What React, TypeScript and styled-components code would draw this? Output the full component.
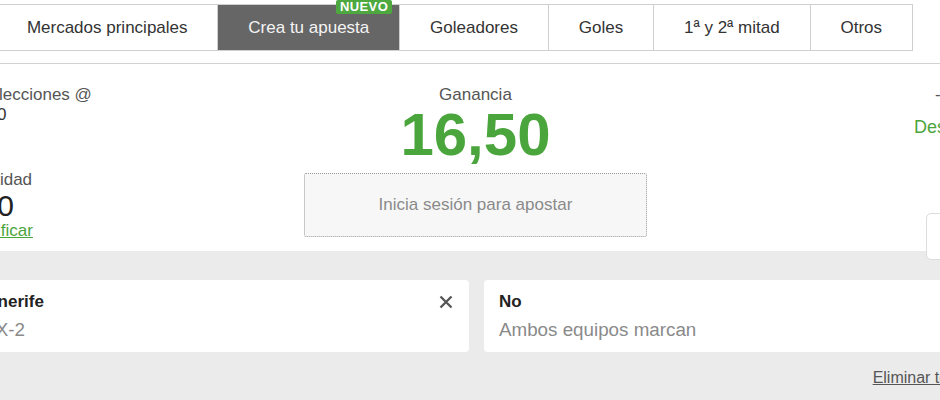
import React from "react";
import styled, { createGlobalStyle } from "styled-components";

const GlobalStyle = createGlobalStyle`
  html, body { margin: 0; padding: 0; background: #fff; }
  body { font-family: "Liberation Sans", Arial, Helvetica, sans-serif; overflow: hidden; }
  * { box-sizing: border-box; }
`;

const Page = styled.div`
  width: 940px;
  height: 400px;
  overflow: hidden;
  display: flex;
  flex-direction: column;
  background: #fff;
`;

const TabBar = styled.nav`
  display: flex;
  flex-shrink: 0;
  margin: 4px 0 12px -4px;
`;

const Tab = styled.div<{ $active?: boolean }>`
  position: relative;
  height: 47px;
  padding: 0 29.9px;
  display: flex;
  align-items: center;
  font-size: 17px;
  white-space: nowrap;
  border: 1px solid #cfcfcf;
  border-left-width: 0;
  &:first-child { border-left-width: 1px; }
  background: ${(p) => (p.$active ? "#666666" : "#ffffff")};
  color: ${(p) => (p.$active ? "#f4f4f4" : "#333333")};
`;

const Badge = styled.span`
  position: absolute;
  top: -5px;
  right: 7px;
  background: #4ca83f;
  color: #fff;
  font-weight: bold;
  font-size: 13px;
  line-height: 14px;
  letter-spacing: 0.4px;
  padding: 0 4px;
  border-radius: 2px;
`;

const Wrapper = styled.div`
  flex: 1;
  width: 1025px;
  margin-left: -36px;
  display: flex;
  flex-direction: column;
`;

const Panel = styled.section`
  background: #fff;
  border-top: 1px solid #d2d2d2;
  display: grid;
  grid-template-columns: 1fr 343px 1fr;
  padding: 21px 0 10px;
`;

const LeftCol = styled.div`
  display: flex;
  flex-direction: column;
  align-items: flex-start;
`;

const Label = styled.div<{ $gap?: number }>`
  font-size: 17px;
  line-height: 20px;
  color: #555;
  white-space: nowrap;
  margin-top: ${(p) => p.$gap ?? 0}px;
`;

const Odds = styled.div`
  font-size: 17px;
  line-height: 20px;
  color: #333;
`;

const Amount = styled.div`
  font-size: 30px;
  line-height: 31px;
  color: #222;
`;

const GreenLink = styled.a`
  font-size: 17px;
  line-height: 20px;
  color: #4ba53d;
  text-decoration: underline;
  cursor: pointer;
  white-space: nowrap;
`;

const CenterCol = styled.div`
  display: flex;
  flex-direction: column;
  align-items: center;
`;

const Big = styled.div`
  font-size: 60px;
  line-height: 60px;
  font-weight: bold;
  color: #4ba53d;
`;

const LoginButton = styled.button`
  margin-top: 8px;
  width: 343px;
  height: 64px;
  background: #f7f7f7;
  border: 1px dotted #9a9a9a;
  border-radius: 2px;
  font-family: inherit;
  font-size: 17px;
  color: #8a8a8a;
  cursor: pointer;
`;

const RightCol = styled.div`
  position: relative;
  display: flex;
  flex-direction: column;
  align-items: flex-start;
`;

const Dash = styled.div`
  font-size: 17px;
  line-height: 20px;
  color: #555;
  margin-left: 288px;
`;

const RightLink = styled(GreenLink)`
  margin: 12px 0 0 267px;
  text-decoration: none;
  font-size: 18px;
`;

const SideBox = styled.div`
  position: absolute;
  top: 128px;
  left: 279px;
  width: 90px;
  height: 47px;
  background: #fff;
  border: 1px solid #dcdcdc;
  border-radius: 5px;
`;

const Lower = styled.section`
  flex: 1;
  background: #ebebeb;
  padding-top: 29px;
`;

const Cards = styled.div`
  display: grid;
  grid-template-columns: 1fr 1fr;
  gap: 15px;
`;

const Card = styled.div`
  height: 72px;
  background: #fff;
  border-radius: 4px;
  padding: 12px 15px 0 15px;
`;

const CardHead = styled.div`
  display: flex;
  justify-content: space-between;
  align-items: center;
`;

const CardTitle = styled.div`
  font-size: 17px;
  line-height: 20px;
  font-weight: bold;
  color: #222;
`;

const CardSub = styled.div`
  font-size: 18.8px;
  line-height: 26px;
  margin-top: 4.5px;
  color: #8a8a8a;
  white-space: nowrap;
`;

const CloseBtn = styled.button`
  width: 16px;
  height: 16px;
  padding: 0;
  border: none;
  background: transparent;
  display: flex;
  align-items: center;
  justify-content: center;
  cursor: pointer;
`;

const Footer = styled.div`
  display: flex;
  justify-content: flex-end;
  padding: 15.5px 15px 0 0;
`;

const ClearLink = styled.a`
  font-size: 16px;
  line-height: 20px;
  color: #555;
  text-decoration: underline;
  cursor: pointer;
`;

const tabs = ["Mercados principales", "Crea tu apuesta", "Goleadores", "Goles", "1ª y 2ª mitad", "Otros"];

const picks = [
  { title: "Tenerife", sub: "1-X-2", close: true },
  { title: "No", sub: "Ambos equipos marcan", close: false },
];

export default function App() {
  return (
    <>
      <GlobalStyle />
      <Page>
        <TabBar>
          {tabs.map((t) => (
            <Tab key={t} $active={t === "Crea tu apuesta"}>
              {t}
              {t === "Crea tu apuesta" && <Badge>NUEVO</Badge>}
            </Tab>
          ))}
        </TabBar>
        <Wrapper>
          <Panel>
            <LeftCol>
              <Label>2 Selecciones @</Label>
              <Odds>16,50</Odds>
              <Label $gap={45}>Cantidad</Label>
              <Amount>€10</Amount>
              <GreenLink>Modificar</GreenLink>
            </LeftCol>
            <CenterCol>
              <Label>Ganancia</Label>
              <Big>16,50</Big>
              <LoginButton>Inicia sesión para apostar</LoginButton>
            </CenterCol>
            <RightCol>
              <Dash>-</Dash>
              <RightLink>Desglose</RightLink>
              <SideBox />
            </RightCol>
          </Panel>
          <Lower>
            <Cards>
              {picks.map((p) => (
                <Card key={p.title}>
                  <CardHead>
                    <CardTitle>{p.title}</CardTitle>
                    {p.close && (
                      <CloseBtn aria-label="Eliminar">
                        <svg width="14" height="14" viewBox="0 0 14 14">
                          <path d="M1.5 1.5 L12.5 12.5 M12.5 1.5 L1.5 12.5" stroke="#555" strokeWidth="2.3" fill="none" />
                        </svg>
                      </CloseBtn>
                    )}
                  </CardHead>
                  <CardSub>{p.sub}</CardSub>
                </Card>
              ))}
            </Cards>
            <Footer>
              <ClearLink>Eliminar todas</ClearLink>
            </Footer>
          </Lower>
        </Wrapper>
      </Page>
    </>
  );
}
